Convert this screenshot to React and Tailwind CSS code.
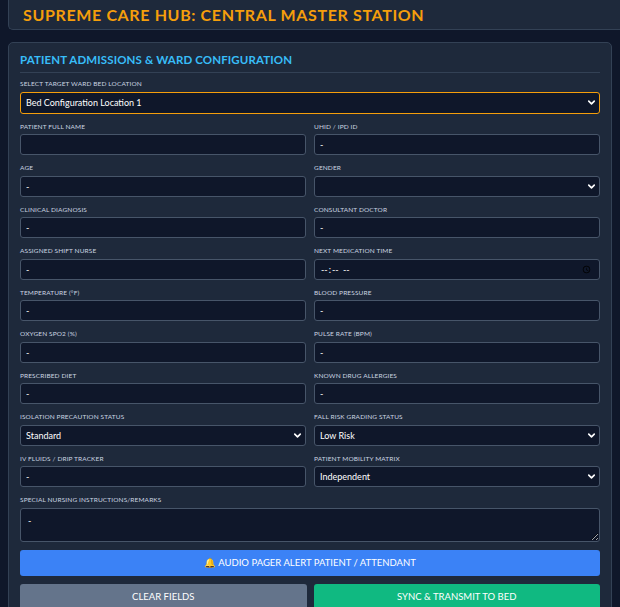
import React from "react";
import { ChevronDown } from "lucide-react";

const inputCls =
  "block w-full h-[21px] bg-[#0f172a] border border-[#475569] rounded-[3px] px-[5px] text-[9px] text-white outline-none";

function Label({ children }) {
  return <div className="text-[6.5px] uppercase text-[#cbd5e1] tracking-[0.02em] leading-none mb-[4px] mt-[10px]">{children}</div>;
}

function Field({ label, value = "-", type = "text", muted }) {
  return (
    <div>
      <Label>{label}</Label>
      <input type={type} defaultValue={value} className={inputCls + (muted ? " text-[#94a3b8]" : "")} />
    </div>
  );
}

function Select({ label, value, accent }) {
  return (
    <div>
      <Label>{label}</Label>
      <div className="relative">
        <select
          defaultValue={value}
          className={
            inputCls +
            " appearance-none " +
            (accent ? "border-[#f59e0b] h-[22px]" : "")
          }
        >
          <option>{value}</option>
        </select>
        <ChevronDown className="absolute right-[3px] top-[5px] w-[11px] h-[11px] text-white pointer-events-none" strokeWidth={3.5} />
      </div>
    </div>
  );
}

export default function App() {
  return (
    <div className="min-h-[607px] bg-[#0f172a] pl-[8px] overflow-hidden" style={{ fontFamily: "Lato, 'Open Sans', sans-serif" }}>
      <div className="h-[30px] bg-[#1e293b] border border-t-0 border-r-0 border-[#334155] rounded-bl-[5px] flex items-center pl-[14px]">
        <h1 className="text-[16px] font-bold text-[#f59e0b] tracking-[0.04em]">SUPREME CARE HUB: CENTRAL MASTER STATION</h1>
      </div>
      <div className="mt-[12px] mr-[8px] bg-[#1e293b] border border-[#334155] rounded-[5px] px-[11px] pt-[8px] pb-[6px]">
        <h2 className="text-[11.5px] font-bold text-[#38bdf8] pb-[4px] border-b border-[#334155] tracking-[0.01em]">
          PATIENT ADMISSIONS &amp; WARD CONFIGURATION
        </h2>
        <div className="-mt-[2px]">
          <Select label="Select target ward bed location" value="Bed Configuration Location 1" accent />
        </div>
        <div className="grid grid-cols-2 gap-x-[8px]">
          <Field label="Patient full name" value="" />
          <Field label="UHID / IPD ID" />
          <Field label="Age" />
          <Select label="Gender" value="" />
          <Field label="Clinical diagnosis" />
          <Field label="Consultant doctor" />
          <Field label="Assigned shift nurse" />
          <Field label="Next medication time" value="" type="time" />
          <Field label="Temperature (°F)" />
          <Field label="Blood pressure" />
          <Field label="Oxygen SpO2 (%)" />
          <Field label="Pulse rate (BPM)" />
          <Field label="Prescribed diet" />
          <Field label="Known drug allergies" muted />
          <Select label="Isolation precaution status" value="Standard" />
          <Select label="Fall risk grading status" value="Low Risk" />
          <Field label="IV fluids / drip tracker" />
          <Select label="Patient mobility matrix" value="Independent" />
        </div>
        <Label>Special nursing instructions/remarks</Label>
        <textarea
          defaultValue="-"
          className="w-full h-[34px] block bg-[#0f172a] border border-[#475569] rounded-[3px] px-[7px] py-[5px] text-[9px] text-white outline-none"
        />
        <button className="block mt-[8px] w-full h-[26px] bg-[#3b82f6] rounded-[3px] text-white text-[9.5px] uppercase">
          🔔 Audio pager alert patient / attendant
        </button>
        <div className="mt-[8px] grid grid-cols-2 gap-x-[7px]">
          <button className="h-[26px] bg-[#64748b] rounded-[3px] text-white text-[9.5px] uppercase">Clear fields</button>
          <button className="h-[26px] bg-[#10b981] rounded-[3px] text-white text-[9.5px] uppercase">Sync &amp; transmit to bed</button>
        </div>
      </div>
    </div>
  );
}
